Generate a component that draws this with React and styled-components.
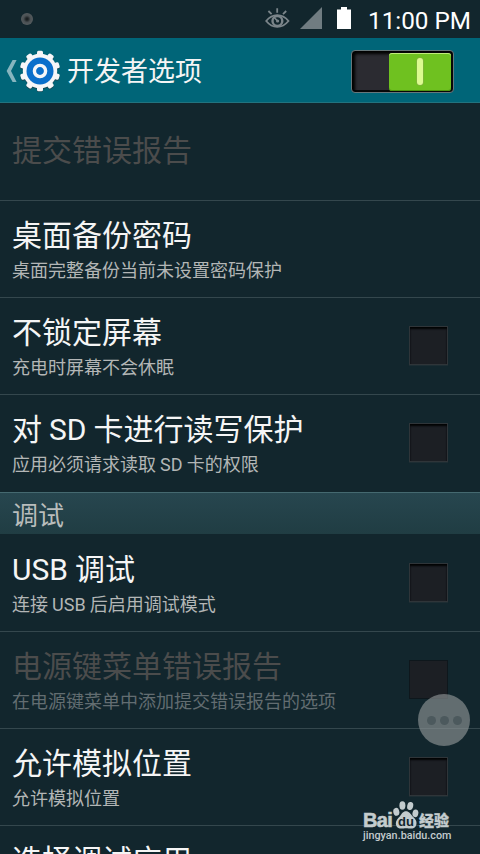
import React from "react";
import styled, { createGlobalStyle } from "styled-components";

const background = "#12262d";
const teal = "#006578";
const divider = "#34474d";
const white = "#f5f5f5";
const grey = "#b3b6b6";

const settings = [
  { title: "提交错误报告", disabled: true, first: true },
  { title: "桌面备份密码", summary: "桌面完整备份当前未设置密码保护" },
  { title: "不锁定屏幕", summary: "充电时屏幕不会休眠", checkbox: true },
  {
    title: "对 SD 卡进行读写保护",
    summary: "应用必须请求读取 SD 卡的权限",
    checkbox: true,
    last: true,
  },
];

const debugSettings = [
  {
    title: "USB 调试",
    summary: "连接 USB 后启用调试模式",
    checkbox: true,
    first: true,
  },
  {
    title: "电源键菜单错误报告",
    summary: "在电源键菜单中添加提交错误报告的选项",
    checkbox: true,
    disabled: true,
  },
  { title: "允许模拟位置", summary: "允许模拟位置", checkbox: true },
  { title: "选择调试应用", alignTop: true },
];

const teeth = [0, 36, 72, 108, 144, 180, 216, 252, 288, 324];

const EyeIcon = () => (
  <svg width="25" height="21" viewBox="0 0 25 21" fill="none" stroke="#7b858a">
    <path d="M3.4 3l3.2 3.2M12.2 .3v4.4M21.2 3l-3.2 3.2" strokeWidth="1.8" />
    <path
      d="M1.2 13C7.5 5.2 17 5.2 23.5 13C17 20.8 7.5 20.8 1.2 13z"
      strokeWidth="1.8"
    />
    <circle cx="12.4" cy="13" r="4.9" strokeWidth="2.4" />
    <circle cx="12.6" cy="13" r="1.6" fill="#7b858a" stroke="none" />
    <path d="M12.5 13L9.2 9.5" strokeWidth="1.6" />
  </svg>
);

const GearIcon = () => (
  <svg width="42" height="42" viewBox="-21 -21 42 42">
    <g fill="#174854" transform="translate(0 1)">
      <circle r="17.2" />
      {teeth.map((angle) => (
        <rect
          key={angle}
          x="-3"
          y="-20.2"
          width="6"
          height="7"
          rx="1.5"
          transform={`rotate(${angle})`}
        />
      ))}
    </g>
    <g fill="#f6f6f8">
      <circle r="17.2" />
      {teeth.map((angle) => (
        <rect
          key={angle}
          x="-3"
          y="-20.2"
          width="6"
          height="7"
          rx="1.5"
          transform={`rotate(${angle})`}
        />
      ))}
    </g>
    <circle r="13.5" fill="#0a6fcb" />
    <circle r="5.6" fill="none" stroke="#f6f6f8" strokeWidth="3.4" />
  </svg>
);

const PawIcon = () => (
  <svg width="26" height="28" viewBox="0 0 26 28" fill="#c3cbcd">
    <ellipse cx="3.3" cy="10.8" rx="3" ry="4" transform="rotate(-12 3.3 10.8)" />
    <ellipse cx="9.4" cy="4.5" rx="3" ry="4.2" />
    <ellipse cx="17.2" cy="5" rx="3" ry="4.1" transform="rotate(12 17.2 5)" />
    <ellipse cx="22.4" cy="12.3" rx="2.9" ry="3.9" transform="rotate(12 22.4 12.3)" />
    <path d="M13 10.3c3 0 4.4 2.4 6.2 4.7c2 2.2 4.5 3.9 4.3 7.2c-.2 3.4-2.3 5.5-5.4 5.4c-2-.1-3.2-.4-5-.4s-3 .3-5 .4c-3 .1-5.2-1.9-5.3-5c-.1-3.3 2.3-5.2 4.2-7.4C8.7 12.9 10 10.3 13 10.3z" />
  </svg>
);

const SettingRow = ({
  title,
  summary,
  checkbox,
  disabled,
  first,
  last,
  alignTop,
}) => (
  <Row $tall={first} $last={last} $single={!summary} $alignTop={alignTop}>
    <RowText $double={summary || alignTop}>
      <Title $disabled={disabled}>{title}</Title>
      {summary && <Summary $disabled={disabled}>{summary}</Summary>}
    </RowText>
    {checkbox && <Checkbox $disabled={disabled} />}
  </Row>
);

const App = () => {
  return (
    <Screen>
      <GlobalStyle />
      <StatusBar>
        <Camera />
        <StatusIcons>
          <EyeIcon />
          <svg width="22" height="22" viewBox="0 0 22 22">
            <path d="M0 22L22 0V22z" fill="#707c81" />
          </svg>
          <svg width="14" height="22" viewBox="0 0 14 22">
            <path d="M0 2.5H4V0H10V2.5H14V22H0z" fill="#fff" />
          </svg>
        </StatusIcons>
        <Clock>11:00 PM</Clock>
      </StatusBar>

      <Header>
        <svg width="11" height="22" viewBox="0 0 11 22">
          <path d="M6.6 0H10.6L5 11L10.6 22H6.6L.6 11z" fill="#86b5bf" />
        </svg>
        <GearIcon />
        <HeaderTitle>开发者选项</HeaderTitle>
        <Toggle>
          <Thumb>
            <ThumbMark />
          </Thumb>
        </Toggle>
      </Header>

      {settings.map((item) => (
        <SettingRow key={item.title} {...item} />
      ))}
      <Section>调试</Section>
      {debugSettings.map((item) => (
        <SettingRow key={item.title} {...item} />
      ))}

      <FloatingButton>
        <Dot />
        <Dot />
        <Dot />
      </FloatingButton>

      <Watermark>
        <Brand>
          <Bai>Bai</Bai>
          <Paw>
            <PawIcon />
            <Du>du</Du>
          </Paw>
          <Jingyan>经验</Jingyan>
        </Brand>
        <Url>jingyan.baidu.com</Url>
      </Watermark>
    </Screen>
  );
};

export default App;

const GlobalStyle = createGlobalStyle`
  * {
    box-sizing: border-box;
  }

  body {
    margin: 0;
    overflow: hidden;
    background: ${background};
    font-family: Roboto, "Noto Sans CJK SC", sans-serif;
  }

  svg {
    display: block;
    flex: none;
  }
`;

const Screen = styled.div`
  position: relative;
  width: 480px;
  height: 854px;
  overflow: hidden;
  background: ${background};
`;

const StatusBar = styled.div`
  display: flex;
  align-items: center;
  height: 38px;
  padding: 0 10px 0 21px;
`;

const Camera = styled.div`
  width: 12px;
  height: 12px;
  border-radius: 50%;
  background: radial-gradient(circle, #1b2022 12%, #4a5053 40%, #565c5f 75%);
`;

const StatusIcons = styled.div`
  display: flex;
  align-items: flex-end;
  margin: 0 17px 2px auto;

  svg:nth-child(2) {
    margin: 0 15px 0 10px;
  }
`;

const Clock = styled.div`
  width: 102px;
  padding-top: 3px;
  color: #fff;
  font-size: 24.3px;
  line-height: 35px;
  white-space: nowrap;
`;

const Header = styled.div`
  display: flex;
  align-items: center;
  height: 65px;
  padding: 0 26px 0 6px;
  border-bottom: 1px solid #22737f;
  background: ${teal};

  svg:first-child {
    margin-top: 2px;
  }

  svg:nth-child(2) {
    margin: 2px 0 0 2px;
  }
`;

const HeaderTitle = styled.div`
  margin-left: 6px;
  padding-top: 4px;
  color: ${white};
  font-size: 27px;
  line-height: 60px;
`;

const Toggle = styled.div`
  display: flex;
  justify-content: flex-end;
  width: 103px;
  height: 43px;
  margin: 3px 0 0 auto;
  padding: 1px;
  border: 1px solid #66777b;
  border-radius: 4px;
  background: #2b2b31;
  box-shadow: inset 2px 2px 3px 1px #000, inset -1px -1px 0 1px #08090a;
`;

const Thumb = styled.div`
  display: flex;
  align-items: center;
  justify-content: center;
  width: 62px;
  height: 38px;
  margin: 1px 1px 0 0;
  border-radius: 3px;
  background: #6fc120;
  box-shadow: inset 0 1px 0 #c0ec7c, inset 0 -1px 0 #4f9412;
`;

const ThumbMark = styled.div`
  width: 6px;
  height: 27px;
  margin-bottom: 1px;
  border-radius: 3px;
  background: #dcfb90;
  box-shadow: 0 0 0 0.5px #8aa94c;
`;

const Row = styled.div`
  display: flex;
  align-items: ${({ $alignTop }) => ($alignTop ? "flex-start" : "center")};
  justify-content: space-between;
  height: ${({ $tall }) => ($tall ? "98px" : "97px")};
  padding: ${({ $alignTop }) => ($alignTop ? "11px" : 0)} 32px
    ${({ $single }) => ($single ? "2px" : 0)} 12px;
  border-bottom: 1px solid ${({ $last }) => ($last ? "transparent" : divider)};
`;

const RowText = styled.div`
  display: flex;
  flex-direction: column;
  padding-top: ${({ $double }) => ($double ? "4px" : 0)};
`;

const Title = styled.div`
  color: ${({ $disabled }) => ($disabled ? "#4b4c4c" : white)};
  font-size: 30px;
  line-height: 40px;
  white-space: nowrap;
  word-spacing: -0.5px;
`;

const Summary = styled.div`
  color: ${({ $disabled }) => ($disabled ? "#626d71" : grey)};
  font-size: 18px;
  line-height: 30px;
  white-space: nowrap;
  word-spacing: -0.4px;
`;

const Checkbox = styled.div`
  flex: none;
  width: 39px;
  height: 39px;
  margin-bottom: 1px;
  border: 1px solid ${({ $disabled }) => ($disabled ? "#0e171c" : "#2f3539")};
  background: #1c1f24;
  box-shadow: ${({ $disabled }) =>
    $disabled ? "none" : "inset 0 2px 2px #020304, 0 1px 1px #1d2d33"};
`;

const Section = styled.div`
  height: 42px;
  padding-left: 12px;
  border-top: 1px solid #456970;
  background: linear-gradient(#27464f, #203d43);
  color: #b9bdbc;
  font-size: 26px;
  line-height: 46px;
`;

const FloatingButton = styled.div`
  position: absolute;
  top: 694px;
  left: 418px;
  display: flex;
  align-items: center;
  justify-content: center;
  gap: 4px;
  width: 52px;
  height: 52px;
  border-radius: 50%;
  background: rgba(140, 146, 147, 0.66);
`;

const Dot = styled.div`
  width: 9px;
  height: 9px;
  border-radius: 50%;
  background: #4c595d;
`;

const Watermark = styled.div`
  position: absolute;
  top: 800px;
  left: 363px;
  width: 90px;
  color: #c3cbcd;
`;

const Brand = styled.div`
  display: flex;
  align-items: flex-end;
  height: 29px;
`;

const Bai = styled.div`
  width: 30px;
  font-family: "Liberation Sans", sans-serif;
  font-size: 20px;
  font-weight: 700;
  line-height: 18px;
  letter-spacing: -0.7px;
  -webkit-text-stroke: 0.6px #c3cbcd;
`;

const Paw = styled.div`
  position: relative;
`;

const Du = styled.div`
  position: absolute;
  bottom: 1px;
  left: 5px;
  color: ${background};
  font-family: "Liberation Sans", sans-serif;
  font-size: 13px;
  font-weight: 700;
  line-height: 13px;
`;

const Jingyan = styled.div`
  font-size: 15px;
  font-weight: 900;
  line-height: 16px;
  -webkit-text-stroke: 0.3px #c3cbcd;
`;

const Url = styled.div`
  font-size: 10.8px;
  font-weight: 500;
  line-height: 14px;
`;
